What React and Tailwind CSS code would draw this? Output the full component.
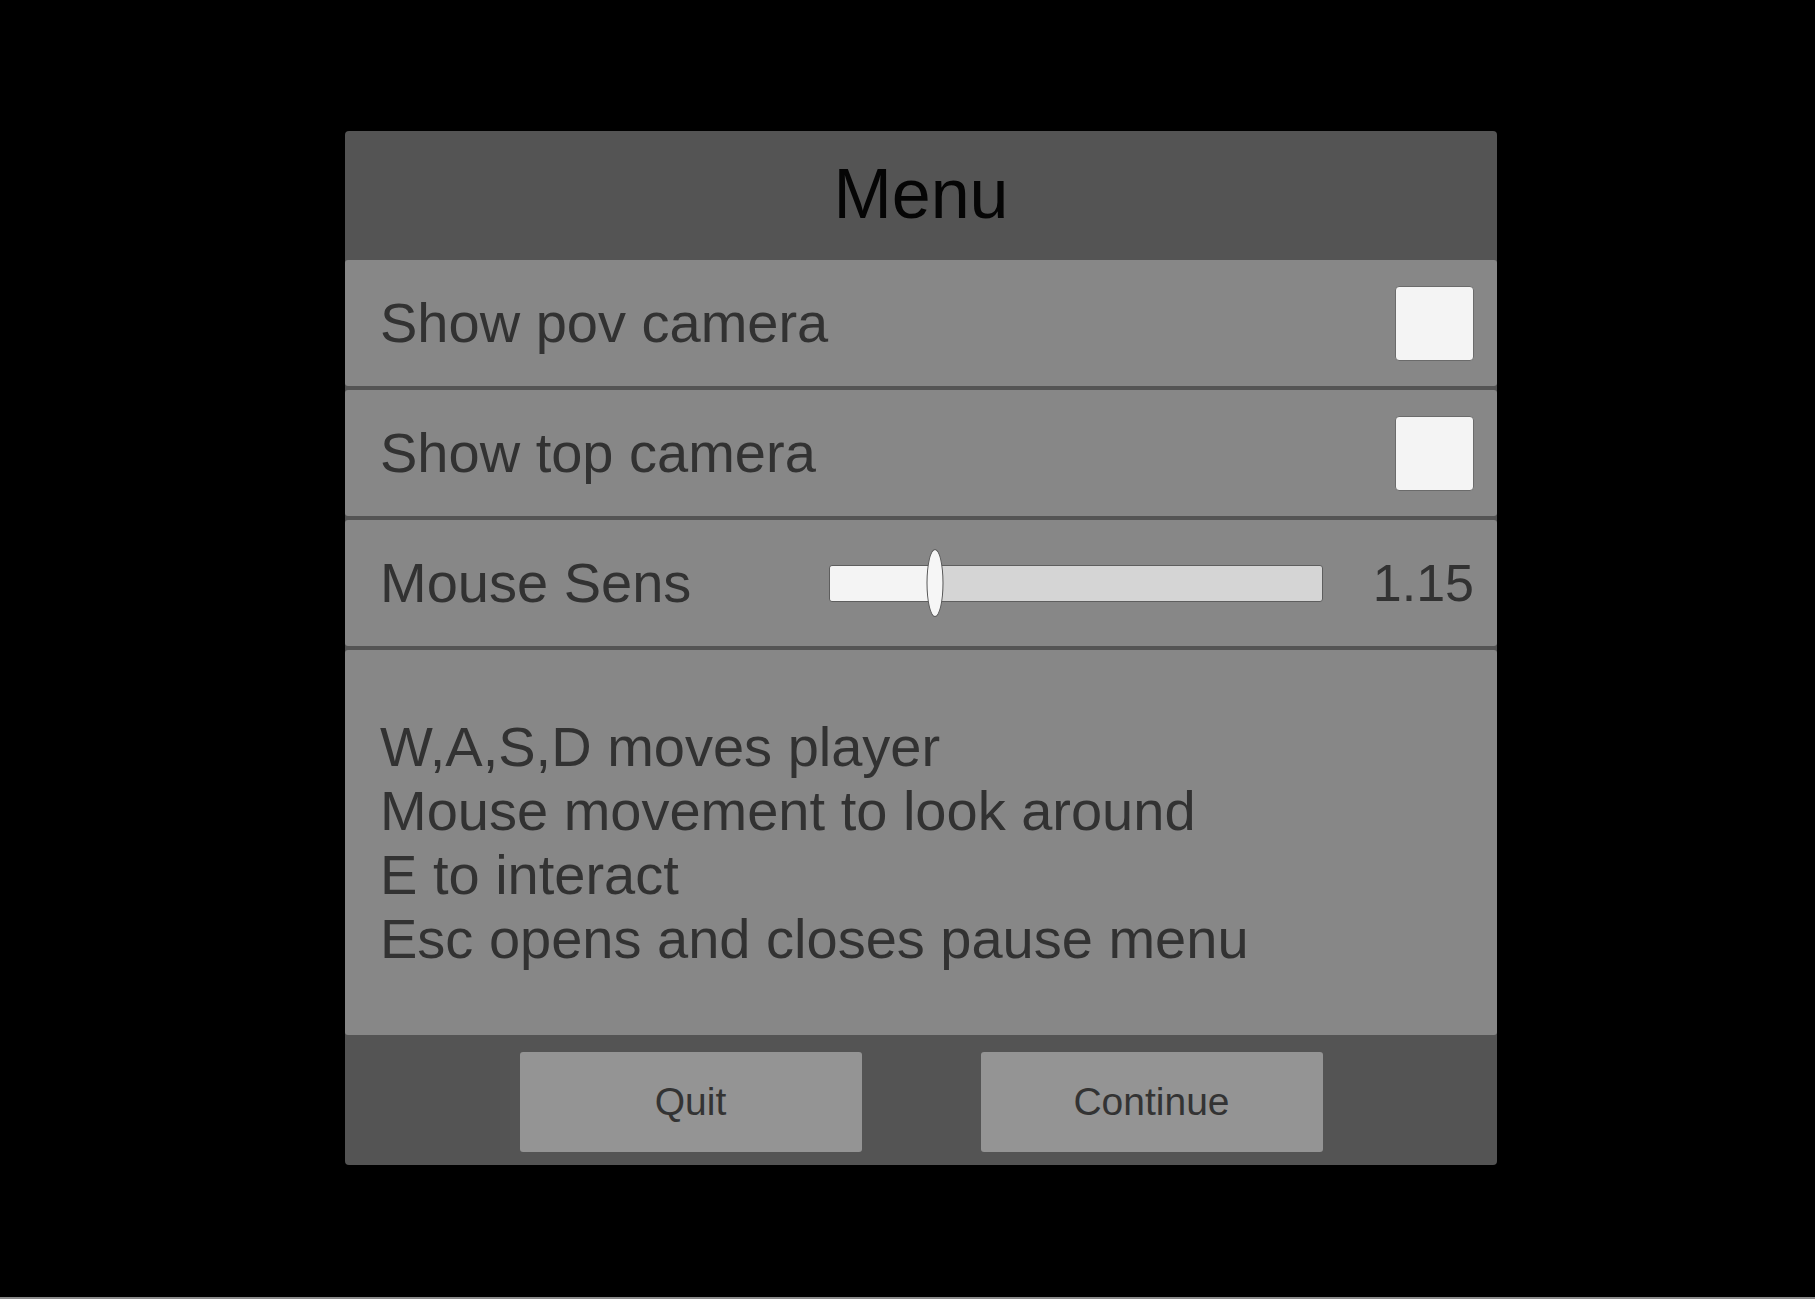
import React, { useState } from "react";

const Toggle = ({ checked, onChange }) => (
  <button
    onClick={() => onChange(!checked)}
    className="w-[79px] h-[75px] rounded-[4px] bg-[#f4f4f4] border border-[#6b6b6b] flex items-center justify-center"
  >
    {checked && <span className="text-[52px] leading-none text-[#323232]">✓</span>}
  </button>
);

const Row = ({ children, className = "" }) => (
  <div className={`bg-[#878787] rounded-[3px] flex items-center pl-[35px] pr-[23px] ${className}`}>
    {children}
  </div>
);

export default function App() {
  const [pov, setPov] = useState(false);
  const [top, setTop] = useState(false);
  const sens = 1.15;
  const fraction = 0.214; // handle position along the track

  return (
    <div className="w-full h-[1299px] bg-black flex flex-col font-[family-name:Liberation_Sans,Arial,sans-serif]">
      <div className="flex-1 pl-[345px] pt-[131px]">
        <div className="w-[1152px] h-[1034px] bg-[#545454] rounded-[4px] flex flex-col">
          {/* Header */}
          <div className="h-[129px] flex items-center justify-center">
            <h1 className="text-[70px] leading-none text-[#050505] pb-[4px]">Menu</h1>
          </div>

          {/* Settings */}
          <div className="flex flex-col gap-[4px]">
            <Row className="h-[126px] justify-between">
              <span className="text-[56px] text-[#323232]">Show pov camera</span>
              <Toggle checked={pov} onChange={setPov} />
            </Row>
            <Row className="h-[126px] justify-between">
              <span className="text-[56px] text-[#323232]">Show top camera</span>
              <Toggle checked={top} onChange={setTop} />
            </Row>
            <Row className="h-[126px]">
              <span className="w-[449px] text-[56px] text-[#323232]">Mouse Sens</span>
              <div className="relative w-[494px] h-[37px] rounded-[3px] border border-[#5e5e5e] bg-[#d5d5d5]">
                <div
                  className="h-full bg-[#f4f4f4] rounded-l-[3px]"
                  style={{ width: `${fraction * 100}%` }}
                />
                <div
                  className="absolute top-1/2 -translate-y-1/2 -translate-x-1/2 w-[17px] h-[68px] rounded-[50%] bg-[#f6f6f6] border border-[#555555]"
                  style={{ left: `${fraction * 100}%` }}
                />
              </div>
              <span className="flex-1 text-right text-[52px] text-[#323232]">{sens.toFixed(2)}</span>
            </Row>
            <Row className="h-[385px]">
              <div className="text-[56px] leading-[64px] text-[#323232]">
                <p>W,A,S,D moves player</p>
                <p>Mouse movement to look around</p>
                <p>E to interact</p>
                <p>Esc opens and closes pause menu</p>
              </div>
            </Row>
          </div>

          {/* Footer */}
          <div className="flex-1 flex justify-center items-start pt-[17px] gap-[119px]">
            <button className="w-[342px] h-[100px] rounded-[3px] bg-[#949494] text-[39px] text-[#333333]">
              Quit
            </button>
            <button className="w-[342px] h-[100px] rounded-[3px] bg-[#949494] text-[39px] text-[#333333]">
              Continue
            </button>
          </div>
        </div>
      </div>
      <div className="h-[2px] bg-[#8a8a8a]" />
    </div>
  );
}
